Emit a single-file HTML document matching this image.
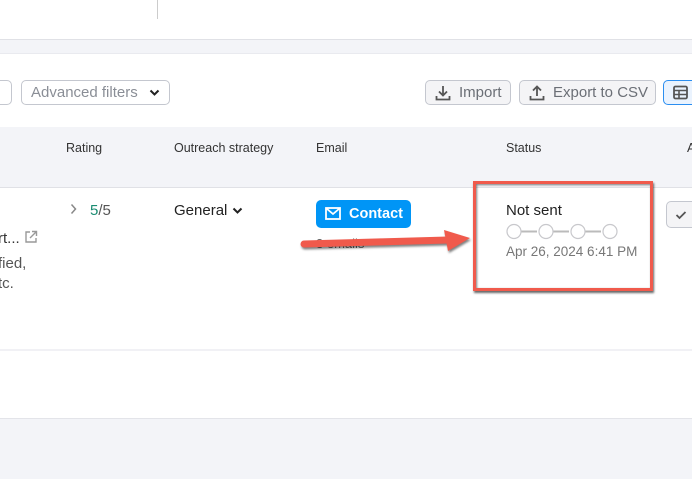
<!DOCTYPE html>
<html><head><style>
body{margin:0;width:692px;height:479px;position:relative;overflow:hidden;background:#fff;font-family:"Liberation Sans",sans-serif;}
.a{position:absolute}
.btn{position:absolute;top:80px;height:25px;border:1px solid #c4c7cf;border-radius:5px;box-sizing:border-box;font-size:15px;color:#6b6f76;line-height:24px;background:#f4f4f6}
.th{position:absolute;top:141px;font-size:12.5px;color:#333}
</style></head><body>
<div class="a" style="left:157px;top:0;width:1px;height:19px;background:#ccc"></div>
<div class="a" style="left:0;top:39px;width:692px;height:15px;background:#f3f4f8;border-top:1px solid #e0e1e6;border-bottom:1px solid #e9eaef;box-sizing:border-box"></div>
<div class="btn" style="left:-10px;width:22px;background:#fff"></div>
<div class="btn" style="left:21px;width:149px;background:#fff;padding-left:9px;color:#8a8e96">Advanced filters <svg style="position:absolute;left:127px;top:8px" width="11" height="8" viewBox="0 0 11 8"><path d="M1.5 1.5l4 4 4-4" stroke="#222" stroke-width="2" fill="none"/></svg></div>
<div class="btn" style="left:425px;width:86px;padding-left:33px"><svg style="position:absolute;left:9px;top:4px" width="16" height="16" viewBox="0 0 16 16"><path d="M8 1v9M4 6.5l4 4 4-4M1.5 11v3.5h13V11" stroke="#555" stroke-width="1.8" fill="none"/></svg>Import</div>
<div class="btn" style="left:519px;width:137px;padding-left:33px"><svg style="position:absolute;left:9px;top:4px" width="16" height="16" viewBox="0 0 16 16"><path d="M8 11V2M4 5.5l4-4 4 4M1.5 11v3.5h13V11" stroke="#555" stroke-width="1.8" fill="none"/></svg>Export to CSV</div>
<div class="btn" style="left:663px;width:40px;border-color:#2b8ef0;background:#eaf3fe"><svg style="position:absolute;left:9px;top:4px" width="15" height="15" viewBox="0 0 15 15"><rect x="1" y="1.5" width="13" height="12" rx="1.5" stroke="#555" stroke-width="1.8" fill="none"/><path d="M1 5.5h13M1 9.5h13M6 5.5v8" stroke="#555" stroke-width="1.6"/></svg></div>
<div class="a" style="left:0;top:127px;width:692px;height:61px;background:#f3f4f8;border-bottom:1px solid #e0e1e6;box-sizing:border-box"></div>
<div class="th" style="left:66px">Rating</div>
<div class="th" style="left:174px">Outreach strategy</div>
<div class="th" style="left:316px">Email</div>
<div class="th" style="left:506px">Status</div>
<div class="th" style="left:687px">A</div>
<svg class="a" style="left:70px;top:203px" width="8" height="12" viewBox="0 0 8 12"><path d="M1.5 1.5l4 4.5-4 4.5" stroke="#888" stroke-width="1.5" fill="none"/></svg>
<div class="a" style="left:90px;top:202px;font-size:15px;color:#555"><span style="color:#1a8c72">5</span>/5</div>
<div class="a" style="left:174px;top:202px;font-size:15px;color:#222">General <svg width="11" height="8" viewBox="0 0 11 8"><path d="M1.5 1.5l4 4 4-4" stroke="#222" stroke-width="2" fill="none"/></svg></div>
<div class="a" style="left:-2px;top:230px;font-size:15px;color:#333">rt... <svg width="14" height="14" viewBox="0 0 14 14" style="vertical-align:-1px"><path d="M6 2H2v10h10V8M8 1.5h4.5V6M12.5 1.5L6 8" stroke="#999" stroke-width="1.4" fill="none"/></svg></div>
<div class="a" style="left:-2px;top:254px;font-size:15px;color:#555;line-height:20px">fied,<br>tc.</div>
<div class="a" style="left:316px;top:200px;width:95px;height:28px;background:#0095f6;border-radius:5px;color:#fff;font-size:14.5px;font-weight:bold;line-height:28px;padding-left:33px;box-sizing:border-box"><svg style="position:absolute;left:9px;top:7px" width="16" height="13" viewBox="0 0 16 13"><rect x="1" y="1" width="14" height="11" stroke="#fff" stroke-width="1.8" fill="none"/><path d="M1.5 1.5l6.5 5.5 6.5-5.5" stroke="#fff" stroke-width="1.8" fill="none"/></svg>Contact</div>
<div class="a" style="left:316px;top:236px;font-size:13px;color:#666">3 emails</div>
<svg class="a" style="left:296px;top:224px" width="180" height="32" viewBox="0 0 180 32"><g filter="drop-shadow(1px 2px 1px rgba(0,0,0,.5))"><path d="M8 20L152 16" stroke="#f05a4c" stroke-width="7" stroke-linecap="round"/><path d="M148 6L174 14L152 27Z" fill="#f05a4c"/></g></svg>
<div class="a" style="left:473px;top:181px;width:180px;height:110px;border:3px solid #f05a4c;box-sizing:border-box;box-shadow:1px 2px 2px rgba(0,0,0,.6),inset 1px 1px 2px rgba(0,0,0,.5)"></div>
<div class="a" style="left:506px;top:202px;font-size:15px;color:#222">Not sent</div>
<svg class="a" style="left:505px;top:223px" width="115" height="17" viewBox="0 0 115 17"><path d="M16 8.5h16M48 8.5h16M80 8.5h16" stroke="#bbb" stroke-width="2"/><g fill="#fff" stroke="#c8c8cc" stroke-width="1.2"><circle cx="9" cy="8.5" r="7"/><circle cx="41" cy="8.5" r="7"/><circle cx="73" cy="8.5" r="7"/><circle cx="105" cy="8.5" r="7"/></g></svg>
<div class="a" style="left:506px;top:244px;font-size:13.5px;color:#777">Apr 26, 2024 6:41 PM</div>
<div class="a" style="left:666px;top:201px;width:40px;height:27px;border:1px solid #c4c7cf;border-radius:5px;background:#f4f4f6;box-sizing:border-box"><svg style="position:absolute;left:8px;top:8px" width="12" height="10" viewBox="0 0 12 10"><path d="M1.5 5l3 3 6-6" stroke="#555" stroke-width="1.8" fill="none"/></svg></div>
<div class="a" style="left:0;top:349px;width:692px;height:2px;background:#f1f1f5"></div>
<div class="a" style="left:0;top:418px;width:692px;height:61px;background:#f3f4f8;border-top:1px solid #e3e4e9;box-sizing:border-box"></div>
</body></html>
